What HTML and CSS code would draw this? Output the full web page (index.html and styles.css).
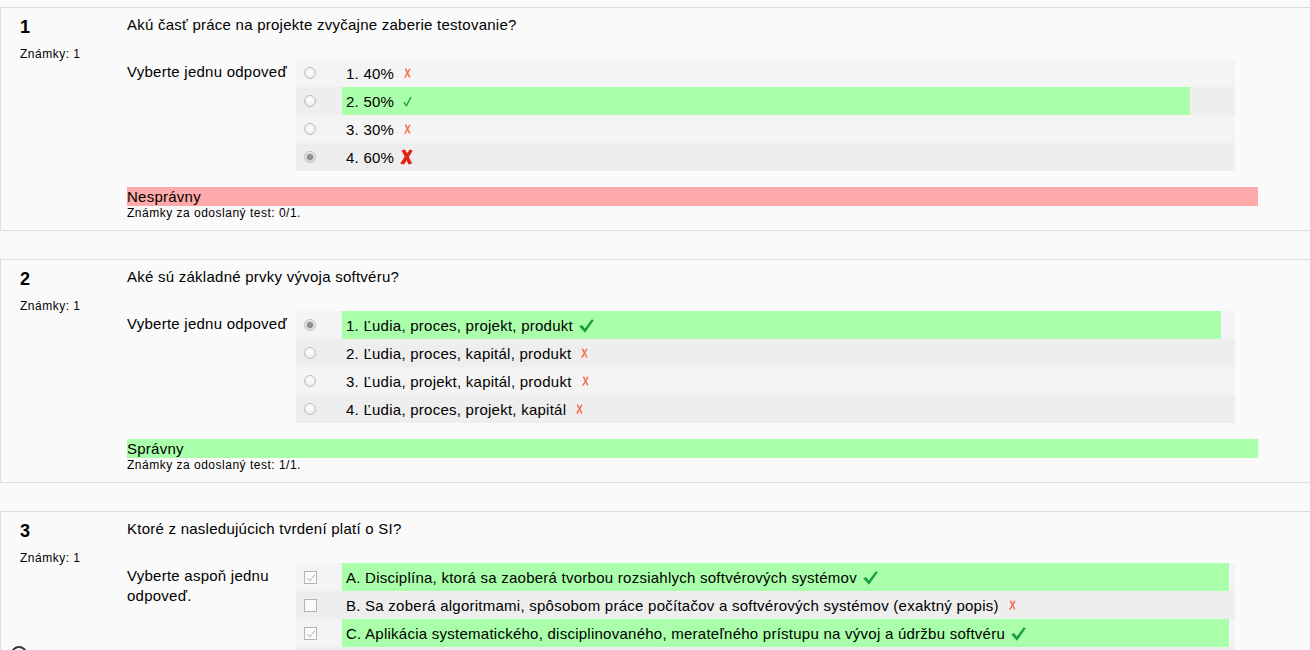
FILE: index.html
```html
<!DOCTYPE html>
<html lang="sk">
<head>
<meta charset="utf-8">
<title>Test</title>
<link rel="stylesheet" href="styles.css">
</head>
<body>
<svg width="0" height="0" class="defs" aria-hidden="true">
  <defs>
    <symbol id="xs" viewBox="0 0 7 10"><path d="M1.6 1.2 L5.6 9" fill="none" stroke="#f8694c" stroke-width="1.5" stroke-linecap="round"/><path d="M5.6 1.3 C4.3 3.6 2.8 6.4 1.2 9" fill="none" stroke="#f8694c" stroke-width="1.5" stroke-linecap="round"/></symbol>
    <symbol id="xl" viewBox="0 0 13 16"><polygon points="1.5,1.2 5,0.6 12.2,14.4 8.6,15.4" fill="#e5230f"/><polygon points="9.6,0.4 12.8,1.4 4,15.6 0.2,14.6" fill="#e5230f"/></symbol>
    <symbol id="cs" viewBox="0 0 9 11"><path d="M1 6.2 L3.4 9.8 L8 1" fill="none" stroke="#1f9d42" stroke-width="1.4" stroke-linejoin="round"/></symbol>
    <symbol id="cl" viewBox="0 0 15 14"><path d="M0.3 7.6 L3 6 L5.8 9.6 L12.8 0.2 L14.8 1.2 L6 13.8 Z" fill="#17a03d"/></symbol>
  </defs>
</svg>

<div class="que">
  <div class="info">
    <h3 class="no">1</h3>
    <div class="grade">Známky: 1</div>
  </div>
  <div class="content">
    <div class="qtext">Akú časť práce na projekte zvyčajne zaberie testovanie?</div>
    <div class="ablock">
      <div class="prompt">Vyberte jednu odpoveď</div>
      <div class="answer">
        <div class="row r0"><span class="ctl"><span class="radio"></span></span><span class="label">1. 40%<svg class="ico-xs"><use href="#xs"/></svg></span></div>
        <div class="row r1"><span class="ctl"><span class="radio"></span></span><span class="label correct w848">2. 50%<svg class="ico-cs"><use href="#cs"/></svg></span></div>
        <div class="row r0"><span class="ctl"><span class="radio"></span></span><span class="label">3. 30%<svg class="ico-xs"><use href="#xs"/></svg></span></div>
        <div class="row r1"><span class="ctl"><span class="radio checked"></span></span><span class="label">4. 60%<svg class="ico-xl"><use href="#xl"/></svg></span></div>
      </div>
    </div>
    <div class="outcome incorrect">Nesprávny</div>
    <div class="gradeinfo">Známky za odoslaný test: 0/1.</div>
  </div>
</div>

<div class="que">
  <div class="info">
    <h3 class="no">2</h3>
    <div class="grade">Známky: 1</div>
  </div>
  <div class="content">
    <div class="qtext">Aké sú základné prvky vývoja softvéru?</div>
    <div class="ablock">
      <div class="prompt">Vyberte jednu odpoveď</div>
      <div class="answer">
        <div class="row r0"><span class="ctl"><span class="radio checked"></span></span><span class="label correct w879">1. Ľudia, proces, projekt, produkt<svg class="ico-cl"><use href="#cl"/></svg></span></div>
        <div class="row r1"><span class="ctl"><span class="radio"></span></span><span class="label">2. Ľudia, proces, kapitál, produkt<svg class="ico-xs"><use href="#xs"/></svg></span></div>
        <div class="row r0"><span class="ctl"><span class="radio"></span></span><span class="label">3. Ľudia, projekt, kapitál, produkt<svg class="ico-xs"><use href="#xs"/></svg></span></div>
        <div class="row r1"><span class="ctl"><span class="radio"></span></span><span class="label">4. Ľudia, proces, projekt, kapitál<svg class="ico-xs"><use href="#xs"/></svg></span></div>
      </div>
    </div>
    <div class="outcome correct">Správny</div>
    <div class="gradeinfo">Známky za odoslaný test: 1/1.</div>
  </div>
</div>

<div class="que">
  <div class="info">
    <h3 class="no">3</h3>
    <div class="grade">Známky: 1</div>
  </div>
  <div class="content">
    <div class="qtext">Ktoré z nasledujúcich tvrdení platí o SI?</div>
    <div class="ablock">
      <div class="prompt">Vyberte aspoň jednu odpoveď.</div>
      <div class="answer">
        <div class="row r0"><span class="ctl"><span class="check checked"></span></span><span class="label correct w887">A. Disciplína, ktorá sa zaoberá tvorbou rozsiahlych softvérových systémov<svg class="ico-cl"><use href="#cl"/></svg></span></div>
        <div class="row r1"><span class="ctl"><span class="check"></span></span><span class="label">B. Sa zoberá algoritmami, spôsobom práce počítačov a softvérových systémov (exaktný popis)<svg class="ico-xs"><use href="#xs"/></svg></span></div>
        <div class="row r0"><span class="ctl"><span class="check checked"></span></span><span class="label correct w887">C. Aplikácia systematického, disciplinovaného, merateľného prístupu na vývoj a údržbu softvéru<svg class="ico-cl"><use href="#cl"/></svg></span></div>
        <div class="row r1"></div>
      </div>
    </div>
  </div>
</div>

<div class="corner"></div>
</body>
</html>
```

FILE: styles.css
```css
html, body {
  margin: 0;
  padding: 0;
  overflow: hidden;
  background: #fafafa;
}

body {
  font-family: "Liberation Sans", Arial, sans-serif;
  color: #000;
  position: relative;
  height: 650px;
}

.defs {
  position: absolute;
  width: 0;
  height: 0;
}

.que {
  display: flex;
  margin: 7px -30px 28px 0;
  border: 1px solid #dddddd;
  background: #fafafa;
}

.info {
  width: 126px;
  flex: none;
  box-sizing: border-box;
  padding: 8px 0 0 19px;
}

.no {
  margin: 0 0 9px 0;
  font-size: 18px;
  line-height: 22px;
  font-weight: bold;
}

.grade {
  font-size: 12px;
  line-height: 14px;
  letter-spacing: 0.5px;
}

.content {
  width: 1131px;
  flex: none;
  padding: 8px 0 10px 0;
  font-size: 15px;
  letter-spacing: 0.25px;
}

.qtext {
  line-height: 18px;
  margin-bottom: 25px;
}

.ablock {
  display: flex;
}

.prompt {
  width: 169px;
  flex: none;
  box-sizing: border-box;
  padding-top: 3px;
  line-height: 20px;
}

.answer {
  width: 939px;
  flex: none;
}

.row {
  display: flex;
  height: 28px;
}

.r0 { background: #f4f4f4; }
.r1 { background: #eeeeee; }

.ctl {
  width: 46px;
  flex: none;
  display: flex;
  align-items: center;
  padding-left: 8px;
  box-sizing: border-box;
}

.label {
  display: flex;
  align-items: center;
  height: 28px;
  padding-left: 4px;
  box-sizing: border-box;
  white-space: nowrap;
}

.label.correct { background: #aaffaa; }
.w848 { width: 848px; }
.w879 { width: 879px; }
.w887 { width: 887px; }

.radio {
  width: 12px;
  height: 12px;
  box-sizing: border-box;
  border-radius: 50%;
  border: 1px solid #bdbdbd;
  background: radial-gradient(circle at 50% 35%, #ffffff 0%, #f3f3f3 50%, #e1e1e1 100%);
  display: flex;
  align-items: center;
  justify-content: center;
}

.radio.checked::after {
  content: "";
  width: 6px;
  height: 6px;
  border-radius: 50%;
  background: radial-gradient(circle at 50% 40%, #9a9a9a 0%, #7a7a7a 100%);
  box-shadow: 0 0 0 1px #c9c9c9;
}

.check {
  width: 13px;
  height: 13px;
  box-sizing: border-box;
  border: 1px solid #b4b4b4;
  background: #fbfbfb;
  position: relative;
}

.check.checked::after {
  content: "";
  position: absolute;
  left: 4px;
  top: 1px;
  width: 3px;
  height: 7px;
  border: solid #bdbdbd;
  border-width: 0 1.5px 1.5px 0;
  transform: rotate(40deg);
}

.ico-xs {
  width: 7px;
  height: 10px;
  margin-left: 10px;
  flex: none;
}

.ico-cs {
  width: 9px;
  height: 11px;
  margin-left: 9px;
  flex: none;
}

.ico-xl {
  width: 13px;
  height: 16px;
  margin-left: 6px;
  flex: none;
}

.ico-cl {
  width: 15px;
  height: 14px;
  margin-left: 6px;
  margin-top: 2px;
  flex: none;
}

.outcome {
  margin-top: 16px;
  line-height: 19px;
}

.outcome.incorrect { background: #ffaaaa; }
.outcome.correct { background: #aaffaa; }

.gradeinfo {
  font-size: 12px;
  line-height: 14px;
  letter-spacing: 0.5px;
}

.corner {
  position: absolute;
  left: 11px;
  top: 646px;
  width: 16px;
  height: 16px;
  box-sizing: border-box;
  border-radius: 50%;
  border: 2px solid #3a3a3a;
}
```
